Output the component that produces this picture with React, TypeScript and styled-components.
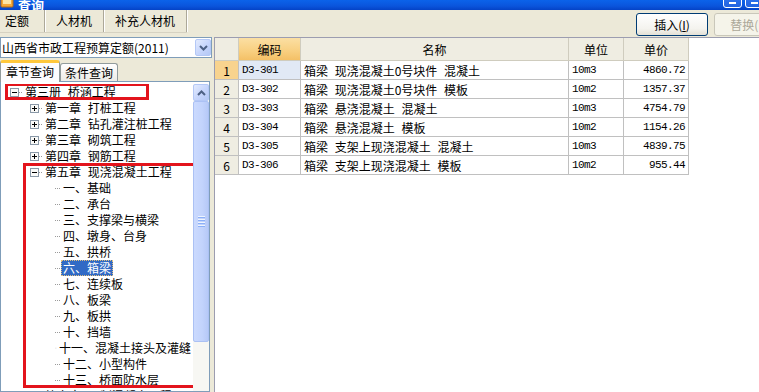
import React from "react";
import styled, { createGlobalStyle, css } from "styled-components";

const GlobalStyle = createGlobalStyle`
  html, body { margin: 0; padding: 0; background: #ECE9D8; }
  body {
    font-family: "Noto Sans CJK SC", "Noto Sans", sans-serif;
    font-size: 12px;
    color: #000;
  }
  * { box-sizing: border-box; }
`;

const Window = styled.div`
  width: 759px;
  height: 392px;
  overflow: hidden;
  display: flex;
  flex-direction: column;
  background: #ECE9D8;
`;

const TitleBar = styled.div`
  height: 10px;
  flex-shrink: 0;
  display: flex;
  align-items: flex-end;
  overflow: hidden;
  background: linear-gradient(to bottom, #0B63EA 0%, #0A55DC 60%, #0443C6 100%);
`;

const TitleText = styled.span`
  color: #fff;
  font-weight: 700;
  font-size: 13px;
  line-height: 13px;
  margin-left: 4px;
  margin-bottom: -1px;
`;

const WinButtons = styled.div`
  margin-left: auto;
  display: flex;
  gap: 3px;
  align-items: flex-end;
  padding-bottom: 2px;
  margin-right: -5px;
`;

const WinButton = styled.div`
  width: 19px;
  height: 21px;
  border: 1px solid #fff;
  border-radius: 3px;
  background: linear-gradient(to bottom, #3C82F8, #2364E0);
  display: flex;
  justify-content: center;
  align-items: flex-end;
  padding-bottom: 3px;
`;

const WinGlyph = styled.div`
  width: 7px;
  height: 2px;
  background: #fff;
`;

const Toolbar = styled.div`
  height: 26px;
  flex-shrink: 0;
  display: flex;
  align-items: flex-start;
`;

const TabStrip = styled.div`
  display: flex;
  height: 23px;
  border-bottom: 1px solid #D6D2C2;
`;

const TopTab = styled.div<{ $first?: boolean }>`
  height: 22px;
  line-height: 22px;
  padding: ${(p) => (p.$first ? "0 15px 0 5px" : "0 11px")};
  border-right: 1px solid #ACA899;
  box-shadow: 1px 0 0 #fff;
  white-space: nowrap;
`;

const ActionGroup = styled.div`
  margin-left: auto;
  width: 123px;
  flex-shrink: 0;
  overflow: hidden;
  display: flex;
  gap: 6px;
  padding-top: 3px;
`;

const ActionButton = styled.div<{ $disabled?: boolean }>`
  flex-shrink: 0;
  width: 72px;
  height: 23px;
  border-radius: 3px;
  display: flex;
  align-items: center;
  justify-content: center;
  white-space: nowrap;
  ${(p) =>
    p.$disabled
      ? css`
          border: 1px solid #C9C7BA;
          color: #ACA899;
          background: #F5F4EA;
        `
      : css`
          border: 1px solid #003C74;
          background: linear-gradient(to bottom, #FFFFFF 0%, #F4F3EE 70%, #E3E0D6 100%);
        `}
`;

const Underline = styled.span`
  text-decoration: underline;
`;

const Main = styled.div`
  flex: 1;
  min-height: 0;
  display: flex;
`;

const LeftPanel = styled.div`
  width: 212px;
  flex-shrink: 0;
  display: flex;
  flex-direction: column;
  padding-top: 1px;
`;

const Combo = styled.div`
  height: 21px;
  border: 1px solid #7F9DB9;
  background: #fff;
  display: flex;
  align-items: center;
`;

const ComboText = styled.div`
  flex: 1;
  padding-left: 1px;
  white-space: nowrap;
  line-height: 17px;
`;

const XpButton = styled.div`
  width: 16px;
  height: 17px;
  flex-shrink: 0;
  border: 1px solid #B4C8F6;
  border-radius: 2px;
  background: linear-gradient(to bottom right, #E3EBFE 0%, #C6D5FC 55%, #B4C8F5 100%);
  display: flex;
  align-items: center;
  justify-content: center;
`;

const PaneTabs = styled.div`
  margin-top: 2px;
  height: 21px;
  display: flex;
  align-items: flex-end;
  position: relative;
  z-index: 2;
`;

const PaneTab = styled.div<{ $active?: boolean }>`
  border: 1px solid #919B9C;
  border-bottom: none;
  border-radius: 3px 3px 0 0;
  white-space: nowrap;
  ${(p) =>
    p.$active
      ? css`
          height: 22px;
          margin-bottom: -1px;
          padding: 0 5px;
          border-top: 3px solid #FFC83C;
          background: #FCFCFE;
          line-height: 18px;
        `
      : css`
          height: 18px;
          padding: 0 4px;
          background: linear-gradient(to bottom, #FFFFFF, #ECEBE6);
          line-height: 17px;
        `}
`;

const TreeBox = styled.div`
  width: 210px;
  flex: 1;
  min-height: 0;
  display: flex;
  border: 1px solid #7F9DB9;
  background: #fff;
  padding-top: 2px;
  overflow: hidden;
`;

const TreeList = styled.div`
  flex: 1;
  min-width: 0;
  position: relative;
  z-index: 1;
  overflow: hidden;
`;

const Marked = styled.div<{ $left: number; $width: number }>`
  position: relative;
  &::after {
    content: "";
    position: absolute;
    left: ${(p) => p.$left}px;
    width: ${(p) => p.$width}px;
    top: -1px;
    bottom: 0;
    border: 3px solid #E3141C;
    pointer-events: none;
  }
`;

const TreeRow = styled.div<{ $level: number }>`
  height: 16px;
  display: flex;
  align-items: center;
  white-space: nowrap;
  padding-left: ${(p) => [9, 29, 54][p.$level]}px;
`;

const TreeLabel = styled.span<{ $selected?: boolean }>`
  line-height: 16px;
  height: 16px;
  padding: 0 2px;
  word-spacing: 4px;
  ${(p) =>
    p.$selected &&
    css`
      background: #316AC5;
      color: #fff;
      outline: 1px dotted #E0C080;
      outline-offset: -1px;
    `}
`;

const Scrollbar = styled.div`
  width: 16px;
  flex-shrink: 0;
  display: flex;
  flex-direction: column;
  background: #F7F7F3;
`;

const Thumb = styled.div`
  height: 241px;
  border: 1px solid #ABC1F4;
  border-radius: 2px;
  background: linear-gradient(to right, #CBDAFE 0%, #C2D3FC 60%, #B6C9F7 100%);
  display: flex;
  flex-direction: column;
  align-items: center;
  justify-content: center;
  gap: 1px;
`;

const Grip = styled.div`
  width: 7px;
  height: 1px;
  background: #EEF4FE;
  box-shadow: 0 1px 0 #8CB0F8;
  margin-bottom: 1px;
`;

const RightPanel = styled.div`
  flex: 1;
  margin-left: 2px;
  margin-top: 1px;
  border-left: 1px solid #9C9DB0;
  border-top: 1px solid #9C9DB0;
  background: #fff;
`;

const Grid = styled.div`
  display: grid;
  grid-template-columns: 24px 62px 268px 55px 65px;
  width: max-content;
`;

const HeadCell = styled.div<{ $active?: boolean }>`
  height: 23px;
  border-right: 1px solid #CFCCBE;
  border-bottom: 1px solid #CFCCBE;
  display: flex;
  align-items: center;
  justify-content: center;
  background: ${(p) =>
    p.$active ? "linear-gradient(to bottom, #FBDFA3 0%, #F8CF80 60%, #F4C066 100%)" : "#EFEDE2"};
`;

type Align = "left" | "center" | "right";

const Cell = styled.div<{ $align?: Align; $mono?: boolean; $tone?: "head" | "headActive" | "focus" }>`
  height: 19px;
  border-right: 1px solid #C0C0C0;
  border-bottom: 1px solid #C0C0C0;
  display: flex;
  align-items: center;
  white-space: nowrap;
  overflow: hidden;
  word-spacing: 4px;
  justify-content: ${(p) =>
    p.$align === "right" ? "flex-end" : p.$align === "center" ? "center" : "flex-start"};
  padding: ${(p) => (p.$align === "right" ? "0 3px 0 0" : p.$align === "center" ? "0" : "0 0 0 3px")};
  ${(p) =>
    p.$mono &&
    css`
      font-family: "Liberation Mono", "DejaVu Sans Mono", monospace;
      font-size: 11px;
      letter-spacing: -0.6px;
    `}
  background: ${(p) =>
    p.$tone === "head" ? "#EFEDE2" : p.$tone === "headActive" ? "#F8D38E" : p.$tone === "focus" ? "#E1E9F5" : "#fff"};
`;

const Toggle = ({ open }: { open: boolean }) => (
  <svg width="13" height="16" viewBox="0 0 13 16">
    <rect x="0.5" y="4.5" width="8" height="8" fill="#FAFAF8" stroke="#8A99A8" />
    <path d="M2 8.5h5" stroke="#000" />
    {!open && <path d="M4.5 6v5" stroke="#000" />}
    <path d="M9 8.5h4" stroke="#9A9A9A" strokeDasharray="1 1" />
  </svg>
);

const Dots = () => (
  <svg width="6" height="16" viewBox="0 0 6 16">
    <path d="M0 8.5h6" stroke="#9A9A9A" strokeDasharray="1 1" />
  </svg>
);

const Chevron = ({ up }: { up?: boolean }) => (
  <svg width="9" height="6" viewBox="0 0 9 6">
    <path
      d={up ? "M1 5l3.5-3.5L8 5" : "M1 1l3.5 3.5L8 1"}
      fill="none"
      stroke="#4D6185"
      strokeWidth="2"
    />
  </svg>
);

const AppIcon = () => (
  <svg width="14" height="10" viewBox="0 0 14 10">
    <rect x="1" y="-4" width="12" height="11" rx="1" fill="#F4A93A" stroke="#B86A12" />
    <rect x="3" y="-2" width="8" height="6" fill="#FDE6A8" />
  </svg>
);

const chapters = ["第一章 打桩工程", "第二章 钻孔灌注桩工程", "第三章 砌筑工程", "第四章 钢筋工程"];
const sections = [
  "一、基础",
  "二、承台",
  "三、支撑梁与横梁",
  "四、墩身、台身",
  "五、拱桥",
  "六、箱梁",
  "七、连续板",
  "八、板梁",
  "九、板拱",
  "十、挡墙",
  "十一、混凝土接头及灌缝",
  "十二、小型构件",
  "十三、桥面防水层",
];

const rows = [
  { code: "D3-301", name: "箱梁 现浇混凝土0号块件 混凝土", unit: "10m3", price: "4860.72" },
  { code: "D3-302", name: "箱梁 现浇混凝土0号块件 模板", unit: "10m2", price: "1357.37" },
  { code: "D3-303", name: "箱梁 悬浇混凝土 混凝土", unit: "10m3", price: "4754.79" },
  { code: "D3-304", name: "箱梁 悬浇混凝土 模板", unit: "10m2", price: "1154.26" },
  { code: "D3-305", name: "箱梁 支架上现浇混凝土 混凝土", unit: "10m3", price: "4839.75" },
  { code: "D3-306", name: "箱梁 支架上现浇混凝土 模板", unit: "10m2", price: "955.44" },
];

export default function App() {
  return (
    <>
      <GlobalStyle />
      <Window>
        <TitleBar>
          <AppIcon />
          <TitleText>查询</TitleText>
          <WinButtons>
            <WinButton>
              <WinGlyph />
            </WinButton>
            <WinButton>
              <WinGlyph />
            </WinButton>
          </WinButtons>
        </TitleBar>

        <Toolbar>
          <TabStrip>
            <TopTab $first>定额</TopTab>
            <TopTab>人材机</TopTab>
            <TopTab>补充人材机</TopTab>
          </TabStrip>
          <ActionGroup>
            <ActionButton>
              插入(<Underline>I</Underline>)
            </ActionButton>
            <ActionButton $disabled>替换(R)</ActionButton>
          </ActionGroup>
        </Toolbar>

        <Main>
          <LeftPanel>
            <Combo>
              <ComboText>山西省市政工程预算定额(2011)</ComboText>
              <XpButton>
                <Chevron />
              </XpButton>
            </Combo>
            <PaneTabs>
              <PaneTab $active>章节查询</PaneTab>
              <PaneTab>条件查询</PaneTab>
            </PaneTabs>
            <TreeBox>
              <TreeList>
                <Marked $left={4} $width={138}>
                  <TreeRow $level={0}>
                    <Toggle open />
                    <TreeLabel>第三册 桥涵工程</TreeLabel>
                  </TreeRow>
                </Marked>
                {chapters.map((c) => (
                  <TreeRow key={c} $level={1}>
                    <Toggle open={false} />
                    <TreeLabel>{c}</TreeLabel>
                  </TreeRow>
                ))}
                <Marked $left={22} $width={170}>
                  <TreeRow $level={1}>
                    <Toggle open />
                    <TreeLabel>第五章 现浇混凝土工程</TreeLabel>
                  </TreeRow>
                  {sections.map((s) => (
                    <TreeRow key={s} $level={2}>
                      <Dots />
                      <TreeLabel $selected={s === "六、箱梁"}>{s}</TreeLabel>
                    </TreeRow>
                  ))}
                </Marked>
                <TreeRow $level={1}>
                  <Toggle open={false} />
                  <TreeLabel>第六章 预制混凝土工程</TreeLabel>
                </TreeRow>
              </TreeList>
              <Scrollbar>
                <XpButton>
                  <Chevron up />
                </XpButton>
                <Thumb>
                  <Grip />
                  <Grip />
                  <Grip />
                  <Grip />
                </Thumb>
              </Scrollbar>
            </TreeBox>
          </LeftPanel>

          <RightPanel>
            <Grid>
              <HeadCell />
              <HeadCell $active>编码</HeadCell>
              <HeadCell>名称</HeadCell>
              <HeadCell>单位</HeadCell>
              <HeadCell>单价</HeadCell>
              {rows.map((r, i) => (
                <React.Fragment key={r.code}>
                  <Cell $align="center" $tone={i === 0 ? "headActive" : "head"}>
                    {i + 1}
                  </Cell>
                  <Cell $mono $tone={i === 0 ? "focus" : undefined}>
                    {r.code}
                  </Cell>
                  <Cell>{r.name}</Cell>
                  <Cell $mono>{r.unit}</Cell>
                  <Cell $mono $align="right">
                    {r.price}
                  </Cell>
                </React.Fragment>
              ))}
            </Grid>
          </RightPanel>
        </Main>
      </Window>
    </>
  );
}
